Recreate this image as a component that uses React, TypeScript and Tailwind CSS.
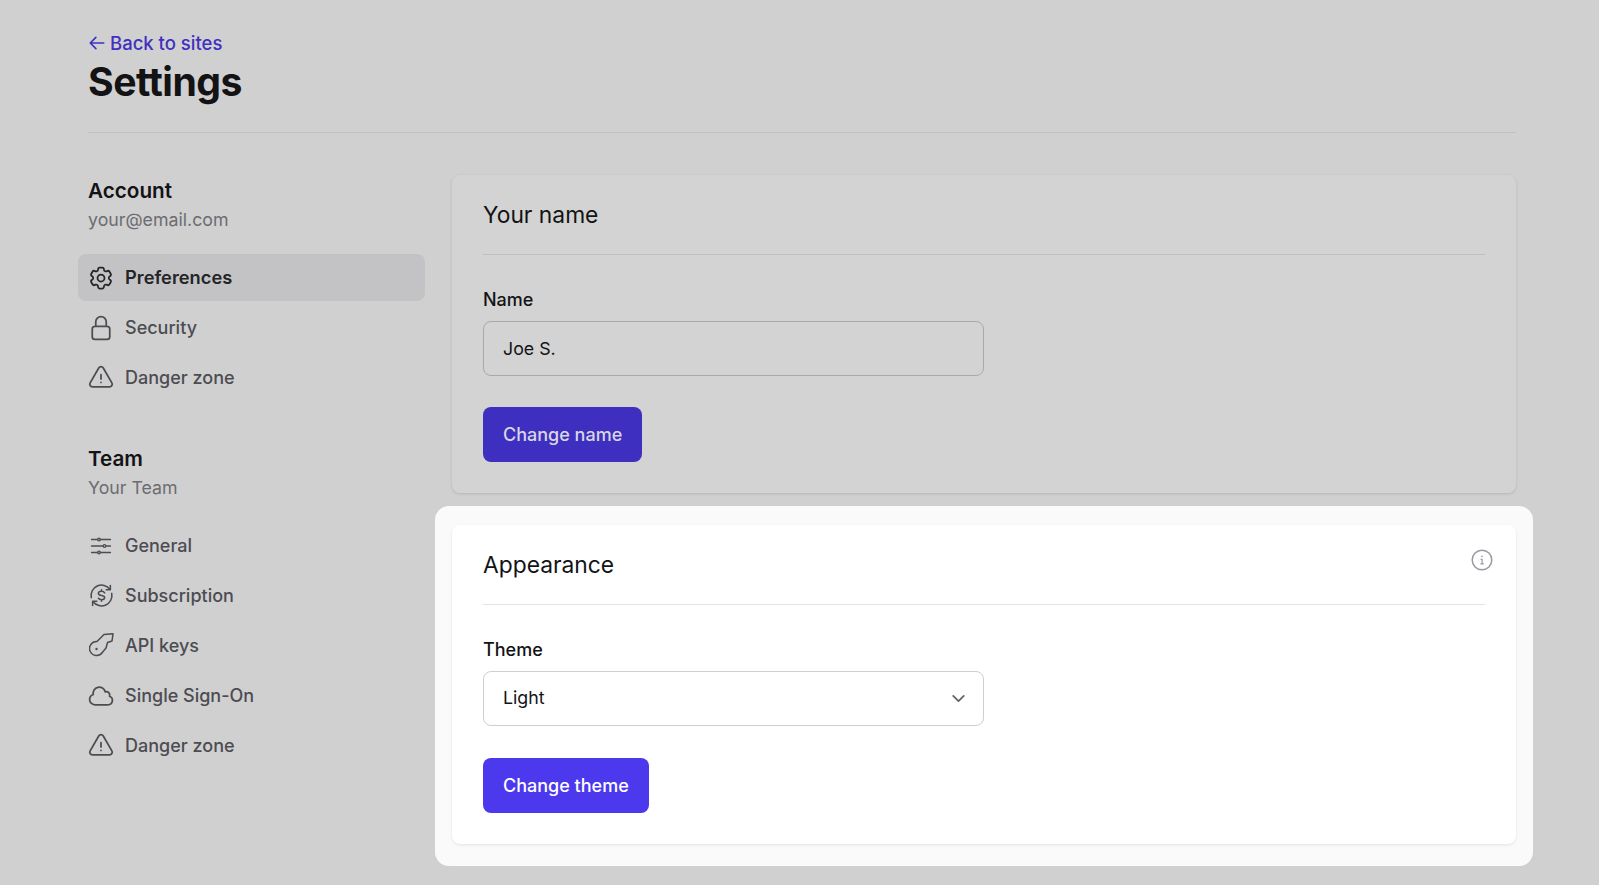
import { ReactNode } from "react";
import {
  HiOutlineArrowLeft,
  HiOutlineChevronDown,
  HiOutlineCloud,
  HiOutlineCog6Tooth,
  HiOutlineExclamationTriangle,
  HiOutlineLockClosed,
} from "react-icons/hi2";

function SlidersIcon() {
  return (
    <svg viewBox="0 0 24 24" fill="none" stroke="currentColor" strokeWidth="1.3" strokeLinecap="round" className="h-6 w-6">
      <path d="M2.5 5.500h6.200M11.200 5.500h10.300M2.500 12h11.700M16.700 12h4.800M2.500 18.500h6.200M11.200 18.500h10.300" />
      <circle cx="10" cy="5.500" r="1.300" />
      <circle cx="15.500" cy="12" r="1.300" />
      <circle cx="10" cy="18.500" r="1.300" />
    </svg>
  );
}

function SubscriptionIcon() {
  return (
    <svg viewBox="0 0 24 24" fill="none" stroke="currentColor" strokeWidth="1.5" strokeLinecap="round" strokeLinejoin="round" className="h-[25px] w-[25px]">
      <path d="M2.200 14A10 10 0 0 1 20 6" />
      <path d="M20.500 2.500v4h-4" />
      <path d="M21.800 10A10 10 0 0 1 4 18" />
      <path d="M3.500 21.500v-4h4" />
      <path d="M15 9.500c-.5-.9-1.600-1.500-3-1.500-1.800 0-3 .9-3 2.100 0 2.800 6 1.200 6 3.900 0 1.200-1.200 2.100-3 2.100-1.400 0-2.500-.6-3-1.500M12 6.500V8M12 16v1.500" />
    </svg>
  );
}

function KeyIcon() {
  return (
    <svg viewBox="0 0 25 25" fill="none" stroke="currentColor" strokeWidth="1.5" strokeLinecap="round" strokeLinejoin="round" className="h-[25px] w-[25px]">
      <path d="M13.300 19.500A7 7 0 1 1 8 8.500L15 1.500L24 .8L23 8L18.500 9.500L17 15Z" />
      <circle cx="7.500" cy="16" r="1.200" fill="currentColor" stroke="none" />
    </svg>
  );
}

function InfoIcon() {
  return (
    <svg viewBox="0 0 22 22" fill="none" stroke="#9a9aa3" strokeWidth="1.5" strokeLinecap="round" className="h-[22px] w-[22px]">
      <circle cx="11" cy="11" r="9.800" />
      <path d="M10 10.300h1.100v4.300M9.800 14.800h2.600" strokeWidth="1.200" />
      <circle cx="11" cy="7.400" r="0.800" fill="#9a9aa3" stroke="none" />
    </svg>
  );
}

function NavItem({ icon, label, active }: { icon: ReactNode; label: string; active?: boolean }) {
  return (
    <a
      href="#"
      className={
        active
          ? "flex h-[47px] items-center gap-3 rounded-lg bg-[#c3c3c6] pl-[11px] text-[18.3px] font-semibold text-[#252528]"
          : "flex h-[47px] items-center gap-3 rounded-lg pl-[11px] text-[18px] font-medium text-[#4c4c52]"
      }
    >
      <span className="flex h-6 w-6 items-center justify-center text-[28px] [&_svg]:shrink-0">{icon}</span>
      {label}
    </a>
  );
}

function SideSection({ title, sub, children }: { title: string; sub: string; children: ReactNode }) {
  return (
    <div>
      <h2 className="text-[20.7px] leading-[26px] font-semibold text-[#131315]">{title}</h2>
      <p className="mt-[2px] text-[17.750px] leading-[28px] text-[#6c6c72]">{sub}</p>
      <nav className="mt-[20px] -ml-[10px] flex w-[347px] flex-col gap-[3px]">{children}</nav>
    </div>
  );
}

function Card({ title, dim, children }: { title: string; dim?: boolean; children: ReactNode }) {
  return (
    <section
      className={
        dim
          ? "rounded-lg bg-[#d3d3d3] px-[31px] pt-[24px] pb-[31px] shadow-[0_1px_3px_rgba(0,0,0,0.13)]"
          : "relative rounded-lg bg-white px-[31px] pt-[24px] pb-[31px] shadow-[0_1px_3px_rgba(0,0,0,0.1)]"
      }
    >
      <h3 className={dim ? "border-b border-[#c0c0c0] pb-[24px] text-[22.8px] leading-[31px] text-[#131315]" : "border-b border-[#e3e3e5] pb-[24px] text-[22.8px] leading-[31px] text-[#131315]"}>
        {title}
      </h3>
      {children}
    </section>
  );
}

export default function App() {
  return (
    <div className="h-[885px] overflow-hidden bg-[#d0d0d0] pt-[31px] pr-[83px] pl-[88px] font-['Inter',sans-serif]">
      <header className="border-b border-[#c2c2c2] pb-[25px]">
        <a href="#" className="flex items-center gap-[4px] text-[18.5px] leading-[24px] font-medium text-[#3f30c1]">
          <HiOutlineArrowLeft className="h-[18px] w-[18px] stroke-[2.2]" />
          Back to sites
        </a>
        <h1 className="mt-[2px] text-[39.2px] leading-[50px] font-bold tracking-[-0.5px] text-[#131315]">Settings</h1>
      </header>

      <div className="mt-[42px] flex">
        <aside className="flex w-[364px] flex-none flex-col gap-[45px] pt-[3px]">
          <SideSection title="Account" sub="your@email.com">
            <NavItem active label="Preferences" icon={<HiOutlineCog6Tooth />} />
            <NavItem label="Security" icon={<HiOutlineLockClosed />} />
            <NavItem label="Danger zone" icon={<HiOutlineExclamationTriangle />} />
          </SideSection>
          <SideSection title="Team" sub="Your Team">
            <NavItem label="General" icon={<SlidersIcon />} />
            <NavItem label="Subscription" icon={<SubscriptionIcon />} />
            <NavItem label="API keys" icon={<KeyIcon />} />
            <NavItem label="Single Sign-On" icon={<HiOutlineCloud />} />
            <NavItem label="Danger zone" icon={<HiOutlineExclamationTriangle />} />
          </SideSection>
        </aside>

        <main className="min-w-0 flex-1">
          <Card dim title="Your name">
            <label className="mt-[33px] block text-[18px] leading-[24px] font-medium text-[#131315]">Name</label>
            <input
              readOnly
              value="Joe S."
              className="mt-[9px] block h-[55px] w-[501px] rounded-lg border border-[#a9a9a9] bg-transparent px-[19px] text-[17.800px] text-[#131315]"
            />
            <button className="mt-[31px] block h-[55px] rounded-lg bg-[#3f2fc0] px-[20px] text-[18px] font-medium text-[#d7d7e4]">
              Change name
            </button>
          </Card>

          <div className="mt-[13px] -mx-[17px] rounded-[14px] bg-[#fafafa] px-[17px] pt-[19px] pb-[22px]">
            <Card title="Appearance">
              <span className="absolute top-[24px] right-[23px]">
                <InfoIcon />
              </span>
              <label className="mt-[33px] block text-[18px] leading-[24px] font-medium text-[#131315]">Theme</label>
              <div className="mt-[9px] flex h-[55px] w-[501px] items-center justify-between rounded-lg border border-[#cfcfd2] bg-white pr-[16px] pl-[19px] text-[17.800px] text-[#131315]">
                Light
                <HiOutlineChevronDown className="h-[17px] w-[17px] stroke-[2.5] text-[#62626c]" />
              </div>
              <button className="mt-[32px] block h-[55px] rounded-lg bg-[#4c38ed] px-[20px] text-[18px] font-medium text-white">
                Change theme
              </button>
            </Card>
          </div>
        </main>
      </div>
    </div>
  );
}
